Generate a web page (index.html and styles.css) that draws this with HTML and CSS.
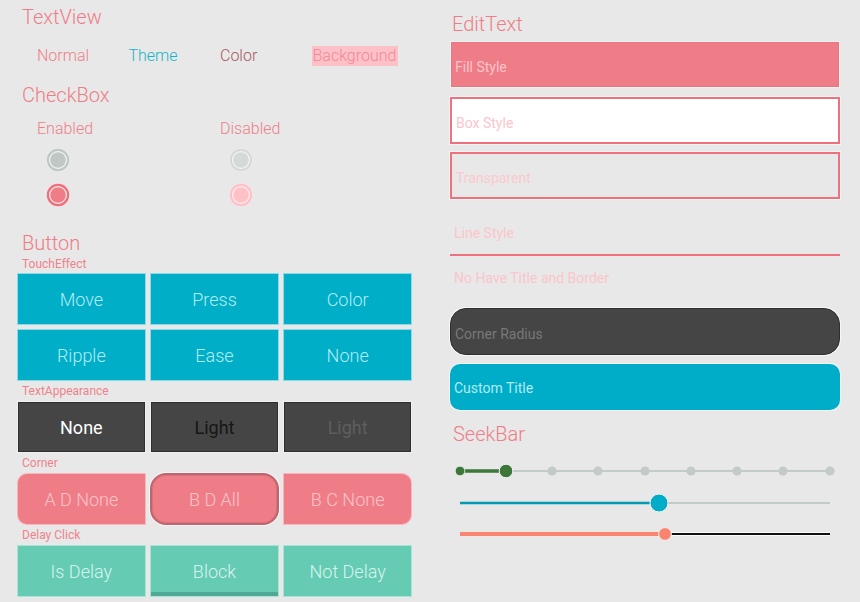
FILE: index.html
```html
<!DOCTYPE html>
<html>
<head>
<meta charset="utf-8">
<link rel="stylesheet" href="styles.css">
</head>
<body>
<div class="page">
  <div class="col left">
    <div class="h1 h-text">TextView</div>
    <div class="tv-row">
      <span class="tv normal">Normal</span>
      <span class="tv theme">Theme</span>
      <span class="tv color">Color</span>
      <span class="tv"><span class="bg">Background</span></span>
    </div>
    <div class="h1 h-check">CheckBox</div>
    <div class="cb-grid cb-labels"><span>Enabled</span><span>Disabled</span></div>
    <div class="cb-grid cb-row r1">
      <span class="radio"><svg width="24" height="24" viewBox="0 0 24 24"><circle cx="12" cy="12" r="11.8" fill="#eef0ef"/><circle cx="12" cy="12" r="11.2" fill="#c0c8c6"/><circle cx="12" cy="12" r="9" fill="#f2f4f3"/><circle cx="12" cy="12" r="7.8" fill="#c0c8c6"/></svg></span>
      <span class="radio"><svg width="24" height="24" viewBox="0 0 24 24"><circle cx="12" cy="12" r="11.8" fill="#eef0ef"/><circle cx="12" cy="12" r="11.2" fill="#d5dad9"/><circle cx="12" cy="12" r="9" fill="#f2f4f3"/><circle cx="12" cy="12" r="7.8" fill="#d5dad9"/></svg></span>
    </div>
    <div class="cb-grid cb-row r2">
      <span class="radio"><svg width="24" height="24" viewBox="0 0 24 24"><circle cx="12" cy="12" r="11.8" fill="#f3e5e6"/><circle cx="12" cy="12" r="11.2" fill="#ee6f7b"/><circle cx="12" cy="12" r="9" fill="#fbeeee"/><circle cx="12" cy="12" r="7.8" fill="#ef7d87"/></svg></span>
      <span class="radio"><svg width="24" height="24" viewBox="0 0 24 24"><circle cx="12" cy="12" r="11.8" fill="#f3e9ea"/><circle cx="12" cy="12" r="11.2" fill="#ffc0c6"/><circle cx="12" cy="12" r="9" fill="#fff2f3"/><circle cx="12" cy="12" r="7.8" fill="#ffc0c6"/></svg></span>
    </div>
    <div class="h1 h-button">Button</div>
    <div class="sub">TouchEffect</div>
    <div class="btn-grid two">
      <div class="btn cyan">Move</div>
      <div class="btn cyan">Press</div>
      <div class="btn cyan">Color</div>
      <div class="btn cyan">Ripple</div>
      <div class="btn cyan">Ease</div>
      <div class="btn cyan">None</div>
    </div>
    <div class="sub">TextAppearance</div>
    <div class="btn-grid">
      <div class="btn dark t-white">None</div>
      <div class="btn dark t-black">Light</div>
      <div class="btn dark t-gray">Light</div>
    </div>
    <div class="sub">Corner</div>
    <div class="btn-grid">
      <div class="btn pink c-left">A D None</div>
      <div class="btn pink c-all">B D All</div>
      <div class="btn pink c-right">B C None</div>
    </div>
    <div class="sub">Delay Click</div>
    <div class="btn-grid">
      <div class="btn green">Is Delay</div>
      <div class="btn green block">Block</div>
      <div class="btn green">Not Delay</div>
    </div>
  </div>

  <div class="col right">
    <div class="h1 h-edit">EditText</div>
    <div class="et fill">Fill Style</div>
    <div class="et box">Box Style</div>
    <div class="et trans">Transparent</div>
    <div class="et line">Line Style</div>
    <div class="et plain">No Have Title and Border</div>
    <div class="et corner">Corner Radius</div>
    <div class="et custom">Custom Title</div>
    <div class="h1 h-seek">SeekBar</div>
    <div class="seek s1">
      <svg width="390" height="20" viewBox="0 0 390 20">
        <line x1="10" y1="10" x2="380" y2="10" stroke="#c3cbc9" stroke-width="2"/>
        <circle cx="102" cy="10" r="4.6" fill="#c3cbc9"/>
        <circle cx="148" cy="10" r="4.6" fill="#c3cbc9"/>
        <circle cx="195" cy="10" r="4.6" fill="#c3cbc9"/>
        <circle cx="241" cy="10" r="4.6" fill="#c3cbc9"/>
        <circle cx="287" cy="10" r="4.6" fill="#c3cbc9"/>
        <circle cx="333" cy="10" r="4.6" fill="#c3cbc9"/>
        <circle cx="380" cy="10" r="4.6" fill="#c3cbc9"/>
        <line x1="10" y1="10" x2="56" y2="10" stroke="#3d7639" stroke-width="3.5"/>
        <circle cx="10" cy="10" r="4.8" fill="#3d7639" stroke="#f4f4f4" stroke-width="0.8"/>
        <circle cx="56" cy="10" r="6.8" fill="#3d7639" stroke="#f4f4f4" stroke-width="1"/>
      </svg>
    </div>
    <div class="seek s2">
      <svg width="390" height="24" viewBox="0 0 390 24">
        <line x1="10" y1="12" x2="380" y2="12" stroke="#c3cbc9" stroke-width="2"/>
        <line x1="10" y1="12" x2="209" y2="12" stroke="#0499b3" stroke-width="2.4"/>
        <circle cx="209" cy="12" r="9" fill="#00acc8" stroke="#f4f4f4" stroke-width="1"/>
      </svg>
    </div>
    <div class="seek s3">
      <svg width="390" height="20" viewBox="0 0 390 20">
        <line x1="215" y1="10" x2="380" y2="10" stroke="#fafafa" stroke-width="4"/>
        <line x1="215" y1="10" x2="380" y2="10" stroke="#111" stroke-width="2"/>
        <line x1="10" y1="10" x2="215" y2="10" stroke="#fb8471" stroke-width="4"/>
        <circle cx="215" cy="10" r="6.4" fill="#fb8471" stroke="#f4f4f4" stroke-width="1"/>
      </svg>
    </div>
  </div>
</div>
</body>
</html>
```

FILE: styles.css
```css
html, body {
  margin: 0;
  padding: 0;
}
body {
  background: #e8e8e8;
  font-family: Roboto, "Liberation Sans", sans-serif;
  font-weight: 300;
  color: #ef7d87;
  width: 860px;
  height: 602px;
  overflow: hidden;
}
.page {
  display: flex;
  padding-left: 18px;
  gap: 38px;
}
.col { display: flex; flex-direction: column; }
.left { width: 394px; }
.right { width: 390px; }

.h1 {
  font-size: 20px;
  color: #ef7d87;
  margin-left: 4px;
}
.h-text { height: 34px; line-height: 34px; }
.h-check { height: 30px; line-height: 30px; margin-top: 14px; }
.h-button { height: 28px; line-height: 28px; margin-top: 22px; }

.tv-row {
  display: grid;
  grid-template-columns: repeat(4, 91.5px);
  margin-left: 19px;
  margin-top: 12px;
  height: 20px;
  line-height: 20px;
  font-size: 16px;
}
.tv { white-space: nowrap; }
.tv.normal { color: #ef7f88; }
.tv.theme { color: #17b4c8; }
.tv.color { color: #a85a62; }
.tv .bg {
  display: inline-block;
  background: #ffc1c8;
  color: #f28893;
  padding: 0 2px 0 1px;
  line-height: 20px;
}

.cb-grid {
  display: grid;
  grid-template-columns: 183px 183px;
  margin-left: 19px;
}
.cb-labels {
  margin-top: 9px;
  height: 20px;
  line-height: 20px;
  font-size: 16px;
  color: #ef8089;
}
.cb-row { height: 24px; }
.cb-row.r1 { margin-top: 9px; }
.cb-row.r2 { margin-top: 11px; }
.radio { display: block; margin-left: 9px; height: 24px; }
.radio svg { display: block; }

.sub {
  font-size: 12px;
  height: 14px;
  line-height: 14px;
  margin-left: 4px;
  color: #f0828c;
  font-weight: 400;
  margin-top: 3px;
}
.h-button + .sub { margin-top: 0; }

.btn-grid {
  display: grid;
  grid-template-columns: repeat(3, 1fr);
  grid-auto-rows: 52px;
  gap: 4px 4.5px;
  margin-top: 3px;
  margin-left: -1px;
}
.btn-grid.two { margin-top: 2px; }
.btn {
  box-sizing: border-box;
  display: flex;
  align-items: center;
  justify-content: center;
  font-size: 18px;
  font-weight: 300;
  border: 1px solid rgba(255,255,255,0.55);
}
.btn.cyan { background: #00aec8; color: #b3ecf3; }
.btn.dark {
  background: #454545;
  border: 1px solid #f0f0f0;
  box-shadow: inset 0 0 0 1px #2e2e2e;
  font-weight: 400;
}
.t-white { color: #ffffff; }
.t-black { color: #161616; }
.t-gray { color: #5e5e5e; }
.btn.pink { background: #ef7d87; color: #fcc3c8; border-color: rgba(255,255,255,0.45); }
.btn.c-left { border-radius: 10px 0 0 10px; }
.btn.c-right { border-radius: 0 10px 10px 0; }
.btn.c-all {
  border-radius: 16px;
  border: 2px solid #c0646d;
  box-shadow: 0 0 0 1px rgba(255,255,255,0.6), inset 0 0 0 1px #d8727c;
}
.btn.green { background: #65cbb3; color: #d7f4ee; border-color: rgba(255,255,255,0.45); }
.btn.block { box-shadow: inset 0 -4px 0 #4faa95; }

.h-edit { height: 28px; line-height: 28px; margin-top: 10px; margin-left: 2px; }
.et {
  box-sizing: border-box;
  height: 47px;
  font-size: 14px;
  font-weight: 400;
  padding-left: 4px;
  padding-top: 4px;
  display: flex;
  align-items: center;
  color: #fcc5cb;
}
.et.fill {
  margin-top: 3px;
  background: #ef7d87;
  color: #fbc4c9;
  border: 1px solid #f5f5f5;
  box-shadow: inset 0 0 0 1px #ec7480;
}
.et.box {
  margin-top: 9px;
  background: #ffffff;
  border: 2px solid #ee717d;
  box-shadow: 0 0 0 1px #f5f5f5;
}
.et.trans {
  margin-top: 8px;
  border: 2px solid #ee717d;
  box-shadow: 0 0 0 1px #f5f5f5;
  color: #fcc9ce;
}
.et.line {
  margin-top: 9px;
  height: 48px;
  border-bottom: 2px solid #ee717d;
  padding-top: 4px;
  padding-bottom: 0;
}
.et.plain {
  height: 44px;
  padding-top: 0;
}
.et.corner {
  margin-top: 8px;
  background: #454545;
  color: #787878;
  border-radius: 16px;
  border: 1px solid #2e2e2e;
  box-shadow: 0 0 0 1px #f7f7f7;
}
.et.custom {
  margin-top: 9px;
  height: 46px;
  padding-top: 2px;
  background: #00adc8;
  color: #b2ebf2;
  border-radius: 10px;
  box-shadow: 0 0 0 1px #f5f5f5;
}
.h-seek { height: 28px; line-height: 28px; margin-top: 10px; margin-left: 3px; }
.seek svg { display: block; }
.s1 { margin-top: 13px; height: 20px; }
.s2 { margin-top: 10px; height: 24px; }
.s3 { margin-top: 9px; height: 20px; }
```
